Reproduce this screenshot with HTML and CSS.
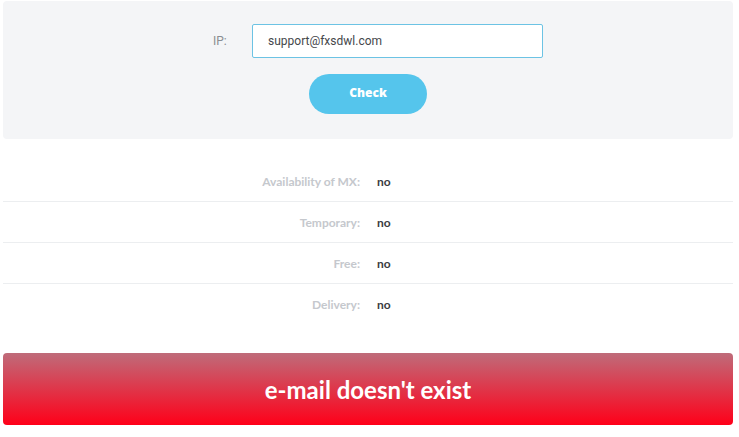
FILE: index.html
```html
<!DOCTYPE html>
<html lang="en">
<head>
<meta charset="UTF-8">
<meta name="viewport" content="width=device-width, initial-scale=1.0">
<title>E-mail check</title>
<link rel="stylesheet" href="styles.css">
</head>
<body>
<div class="page">
  <form class="check-form" onsubmit="return false">
    <div class="form-row">
      <label class="form-label" for="ip">IP:</label>
      <input class="form-input" id="ip" type="text" value="support@fxsdwl.com">
    </div>
    <button class="check-btn" type="submit">Check</button>
  </form>

  <div class="results">
    <div class="result-row">
      <span class="result-label">Availability of MX:</span>
      <span class="result-value">no</span>
    </div>
    <div class="result-row">
      <span class="result-label">Temporary:</span>
      <span class="result-value">no</span>
    </div>
    <div class="result-row">
      <span class="result-label">Free:</span>
      <span class="result-value">no</span>
    </div>
    <div class="result-row">
      <span class="result-label">Delivery:</span>
      <span class="result-value">no</span>
    </div>
  </div>

  <div class="verdict">e-mail doesn't exist</div>
</div>
</body>
</html>
```

FILE: styles.css
```css
body {
  margin: 0;
  font-family: Lato, "Open Sans", Arial, sans-serif;
  background-color: #ffffff;
}

.page {
  padding: 1px 6px 0 3px;
}

.check-form {
  display: flex;
  flex-direction: column;
  align-items: center;
  background-color: #f4f5f7;
  border-radius: 4px;
  padding: 23px 0 25px;
  margin: 0;
}

.form-row {
  display: flex;
  align-items: center;
  margin-left: 20px;
}

.form-label {
  width: 39px;
  font-family: Roboto, Arial, sans-serif;
  font-size: 12px;
  color: #8a8d92;
}

.form-input {
  width: 291px;
  height: 34px;
  box-sizing: border-box;
  padding: 0 15px;
  border: 1px solid #6cc3e4;
  border-radius: 2px;
  background-color: #ffffff;
  font-family: Roboto, Arial, sans-serif;
  font-size: 12px;
  color: #45474b;
  outline: none;
}

.check-btn {
  margin-top: 16px;
  width: 118px;
  height: 40px;
  padding: 0 0 3px;
  border: none;
  border-radius: 20px;
  background-color: #55c5ec;
  color: #ffffff;
  font-family: "Open Sans", Arial, sans-serif;
  font-weight: 800;
  font-size: 12px;
  cursor: pointer;
}

.results {
  margin-top: 22px;
}

.result-row {
  display: flex;
  align-items: center;
  height: 40px;
  border-bottom: 1px solid #eceef0;
  font-size: 12px;
  font-weight: 700;
}

.result-row:last-child {
  border-bottom: none;
}

.result-label {
  width: 357px;
  text-align: right;
  color: #c5c8cd;
}

.result-value {
  margin-left: 17px;
  color: #3a3c40;
}

.verdict {
  margin-top: 29px;
  height: 72px;
  display: flex;
  justify-content: center;
  align-items: center;
  border-radius: 4px;
  background: linear-gradient(to bottom, #bf6c7a, #ff0019);
  color: #ffffff;
  font-size: 24px;
  font-weight: 700;
}
```
